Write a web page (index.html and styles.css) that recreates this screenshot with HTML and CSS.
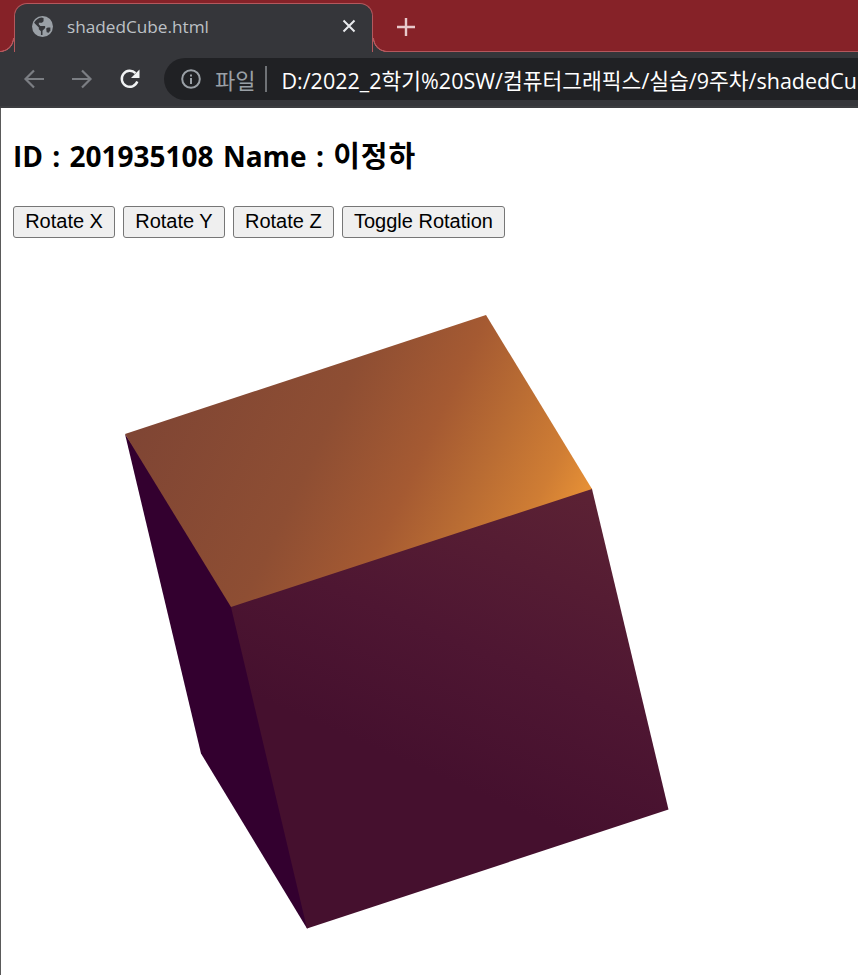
FILE: index.html
```html
<!DOCTYPE html>
<html lang="ko">
<head>
  <meta charset="UTF-8">
  <title>shadedCube.html</title>
  <link rel="stylesheet" href="styles.css">
</head>
<body>

<!-- browser frame -->
<header class="chrome">
  <div class="tabstrip">
    <div class="tab">
      <svg class="tab-favicon" viewBox="0 0 20 20" width="21" height="21">
        <circle cx="10" cy="10" r="10" fill="#9aa0a6"/>
        <path d="M9 1.500C6 2 3.500 3.500 2 6.500l4.500 4.500v1.500l2 2V18h1.500v-4l2.500-2.500V9.500H8L6.500 8V6.500H9.500L11 5V2z" fill="#35363a"/>
        <path d="M14 15.500l2 .5 1.500-2.500V11h-2.500l-1.500 1z" fill="#35363a"/>
      </svg>
      <span class="tab-title">shadedCube.html</span>
      <svg class="tab-close" viewBox="0 0 14 14" width="14" height="14">
        <path d="M1.500 1.500l11 11M12.500 1.500l-11 11" stroke="#e8eaed" stroke-width="2"/>
      </svg>
    </div>
    <svg class="new-tab" viewBox="0 0 18 18" width="18" height="18">
      <path d="M9 0v18M0 9h18" stroke="#e8c9cb" stroke-width="2.400"/>
    </svg>
  </div>

  <div class="toolbar">
    <svg class="nav-icon" viewBox="0 0 22 22" width="22" height="22">
      <path d="M21 11H2.500M11 2.500L2.500 11l8.500 8.500" fill="none" stroke="#7b7e83" stroke-width="2.200"/>
    </svg>
    <svg class="nav-icon" viewBox="0 0 22 22" width="22" height="22">
      <path d="M1 11h18.500M11 2.500l8.500 8.500-8.500 8.500" fill="none" stroke="#7b7e83" stroke-width="2.200"/>
    </svg>
    <svg class="nav-icon" viewBox="0 0 22 22" width="22" height="22">
      <path d="M18.300 13.500A8 8 0 1 1 16.500 5.200" fill="none" stroke="#f1f3f4" stroke-width="2.400"/>
      <path d="M20.500 1.500v8.500H12z" fill="#f1f3f4"/>
    </svg>

    <div class="omnibox">
      <svg class="info-icon" viewBox="0 0 20 20" width="20" height="20">
        <circle cx="10" cy="10" r="8.800" fill="none" stroke="#9aa0a6" stroke-width="2"/>
        <rect x="9" y="9" width="2" height="6" fill="#9aa0a6"/>
        <rect x="9" y="5.500" width="2" height="2" fill="#9aa0a6"/>
      </svg>
      <span class="scheme">파일</span>
      <span class="divider"></span>
      <span class="url">D:/2022_2학기%20SW/컴퓨터그래픽스/실습/9주차/shadedCube.html</span>
    </div>
  </div>
</header>

<main class="page">
  <h3 class="student">ID : 201935108 Name : <span class="student-name">이정하</span></h3>

  <div class="controls">
    <button class="btn">Rotate X</button>
    <button class="btn">Rotate Y</button>
    <button class="btn">Rotate Z</button>
    <button class="btn">Toggle Rotation</button>
  </div>

  <!-- cube, coordinates are page pixels. faces overlap a little under each other so no seam shows -->
  <svg class="cube" viewBox="13 250 845 725" width="845" height="725">
    <defs>
      <linearGradient id="topShine" gradientUnits="userSpaceOnUse" x1="592" y1="489" x2="192" y2="298">
        <stop offset="0" stop-color="#e79136"/>
        <stop offset="0.1" stop-color="#cf7d34"/>
        <stop offset="0.24" stop-color="#b96c33"/>
        <stop offset="0.38" stop-color="#a55a32"/>
        <stop offset="0.6" stop-color="#8e4e33"/>
        <stop offset="1" stop-color="#7f4534"/>
      </linearGradient>
      <linearGradient id="frontShade" gradientUnits="userSpaceOnUse" x1="600" y1="490" x2="470" y2="790">
        <stop offset="0" stop-color="#5c2234"/>
        <stop offset="0.6" stop-color="#4e1632"/>
        <stop offset="1" stop-color="#45102e"/>
      </linearGradient>
    </defs>
    <polygon points="125,434 240,600 320,920 307,928.500 201,753.500" fill="#33002f"/>
    <polygon points="233,600 585,482 592,489 668.500,809.500 307,928.500 231,607" fill="url(#frontShade)"/>
    <polygon points="125,434 486,315 592,489 231,607" fill="url(#topShine)"/>
  </svg>
</main>

</body>
</html>
```

FILE: styles.css
```css
html, body { margin: 0; padding: 0; }
body { width: 858px; height: 975px; overflow: hidden; background: #fff; font-family: "Liberation Sans", Arial, sans-serif; }

/* browser frame */
.chrome { background: #35363a; border-bottom: 2px solid #3c3d40; }
.tabstrip { display: flex; align-items: flex-end; height: 52px; background: #862228; border-bottom: 1px solid #b4585d; box-sizing: border-box; }
.tab { position: relative; display: flex; align-items: center; box-sizing: border-box; width: 359px; height: 49px; margin-left: 14px; margin-bottom: -1px; padding: 0 16px 4px 17px; background: #35363a; border: 1px solid #b4585d; border-bottom: 0; border-radius: 13px 13px 0 0; }
.tab::before, .tab::after { content: ""; position: absolute; bottom: 0; width: 14px; height: 14px; }
.tab::before { left: -15px; background: radial-gradient(circle at 0 0, #862228 12.500px, #b4585d 13px, #b4585d 13.800px, #35363a 14.300px); }
.tab::after { right: -15px; background: radial-gradient(circle at 100% 0, #862228 12.500px, #b4585d 13px, #b4585d 13.800px, #35363a 14.300px); }
.tab-favicon { flex: none; margin-right: 14px; }
.tab-title { flex: 1; color: #bdc1c6; font: 17.200px "Open Sans", sans-serif; white-space: nowrap; }
.tab-close { flex: none; }
.new-tab { flex: none; margin: 0 0 15px 24px; }

.toolbar { display: flex; align-items: center; height: 54px; padding-left: 23px; }
.nav-icon { flex: none; margin-right: 26px; }
.omnibox { display: flex; align-items: center; flex: none; width: 720px; height: 42px; margin-left: -3px; padding-left: 17px; box-sizing: border-box; background: #202124; border-radius: 21px; overflow: hidden; }
.info-icon { flex: none; margin-right: 14px; }
.scheme { color: #9aa0a6; font: 22px "Noto Sans CJK KR", sans-serif; white-space: nowrap; }
.divider { flex: none; width: 2px; height: 26px; margin: 0 14px 0 10px; background: #6f7276; }
.url { color: #fff; font: 21.500px "Open Sans", "Noto Sans CJK KR", sans-serif; white-space: nowrap; }

/* page */
.page { height: 867px; padding-left: 12px; border-left: 1px solid #5a5a5a; overflow: hidden; }
.student { margin: 28px 0 0; color: #000; font: bold 28px/40px "Open Sans", "Noto Sans CJK KR", sans-serif; word-spacing: 2px; }
.student-name { font-size: 29px; letter-spacing: 1px; }
.controls { display: flex; gap: 8px; margin-top: 30px; }
.btn { height: 32px; padding: 0 11.150px 2px; color: #000; background: #efefef; border: 1px solid #767676; border-radius: 3px; font: 20px "Liberation Sans", Arial, sans-serif; white-space: nowrap; }
.cube { display: block; margin-top: 12px; }
```
